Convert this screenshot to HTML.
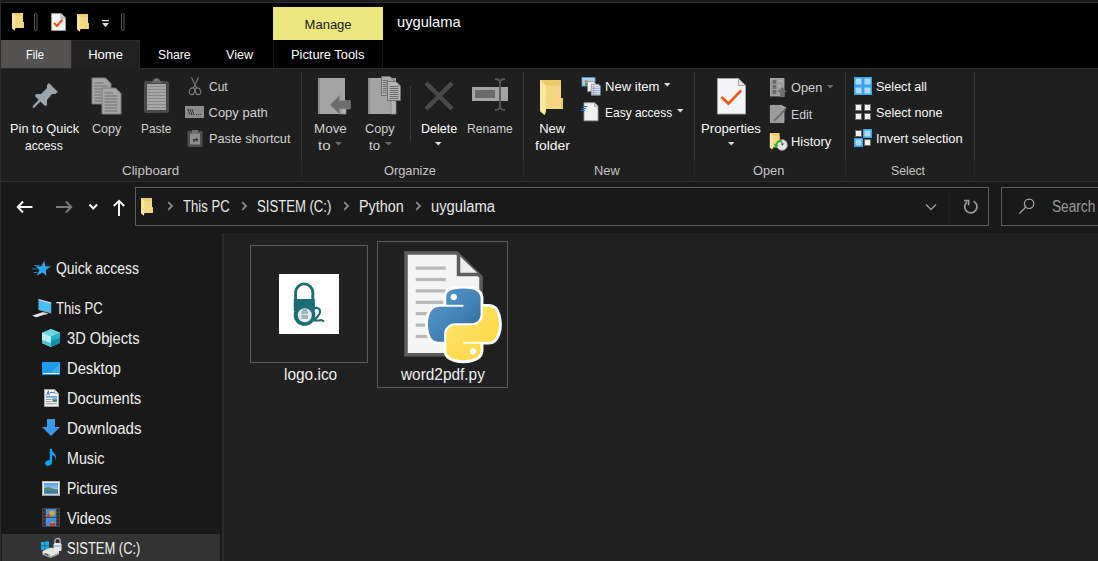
<!DOCTYPE html>
<html><head><meta charset="utf-8"><style>
html,body{margin:0;padding:0;}
body{width:1098px;height:561px;position:relative;overflow:hidden;background:#191919;font-family:"Liberation Sans", sans-serif;}
</style></head><body>
<div style="position:absolute;left:0px;top:0px;width:1098px;height:561px;background:#191919;"></div>
<div style="position:absolute;left:0px;top:0px;width:1098px;height:3px;background:#1c1c1c;"></div>
<div style="position:absolute;left:0px;top:2px;width:1098px;height:1px;background:#333333;"></div>
<div style="position:absolute;left:0px;top:3px;width:1098px;height:65px;background:#000;"></div>
<div style="position:absolute;left:0px;top:0px;width:1px;height:561px;background:#2b2b2b;"></div>
<svg style="position:absolute;left:11px;top:12px" width="14" height="19" viewBox="0 0 14 19"><path d="M1 1 H12 V10 H13 V16 H4 L4 17.5 L3.5 18.5 L1 16Z" fill="#f0cd6e"/><path d="M4.5 4 H12 V16 H4.5Z" fill="#f5d884"/><path d="M1 1 L4.5 4 V16 L3.5 18.5 L1 16Z" fill="#fae39c"/></svg>
<svg style="position:absolute;left:34px;top:13px" width="4" height="18" viewBox="0 0 4 18"><rect x="0.5" y="0.5" width="2.5" height="17" rx="1.25" fill="none" stroke="#5a5a5a"/></svg>
<svg style="position:absolute;left:50.5px;top:12.5px" width="15" height="19" viewBox="0 0 15 19"><path d="M0.5 0.5 H10 L14.5 5 V17.5 H0.5Z" fill="#f4f4f4" stroke="#9a9a9a"/><path d="M10 0.5 V5 H14.5" fill="#dcdcdc" stroke="#9a9a9a"/><path d="M3 10 L6 13 L11.5 6.5" fill="none" stroke="#e8501a" stroke-width="2"/></svg>
<svg style="position:absolute;left:76px;top:13px" width="14" height="19" viewBox="0 0 14 19"><path d="M1 1 H12 V10 H13 V16 H4 L4 17.5 L3.5 18.5 L1 16Z" fill="#f0cd6e"/><path d="M4.5 4 H12 V16 H4.5Z" fill="#f5d884"/><path d="M1 1 L4.5 4 V16 L3.5 18.5 L1 16Z" fill="#fae39c"/></svg>
<svg style="position:absolute;left:101px;top:20px" width="10" height="8" viewBox="0 0 10 8"><rect x="1" y="0" width="7" height="1.3" fill="#e0e0e0"/><path d="M1 3 H8 L4.5 7Z" fill="#e0e0e0"/></svg>
<svg style="position:absolute;left:121px;top:13px" width="4" height="18" viewBox="0 0 4 18"><rect x="0.5" y="0.5" width="2.5" height="17" rx="1.25" fill="none" stroke="#5a5a5a"/></svg>
<div style="position:absolute;left:273px;top:7px;width:110px;height:33px;background:#ebe67e;"></div>
<div style="position:absolute;left:1px;top:40px;width:70px;height:28px;background:#535250;"></div>
<div style="position:absolute;left:71px;top:40px;width:69px;height:29px;background:#2a2a2a;"></div>
<div style="position:absolute;left:72px;top:41px;width:67px;height:28px;background:#212121;"></div>
<div style="position:absolute;left:273px;top:40px;width:1px;height:28px;background:#1a1a1a;"></div>
<div style="position:absolute;left:382px;top:40px;width:1px;height:28px;background:#1a1a1a;"></div>
<div style="position:absolute;left:1px;top:68px;width:1098px;height:113px;background:#1f1f1f;"></div>
<div style="position:absolute;left:1px;top:68px;width:70px;height:1px;background:#2a2a2a;"></div>
<div style="position:absolute;left:140px;top:68px;width:1098px;height:1px;background:#2a2a2a;"></div>
<div style="position:absolute;left:1px;top:181px;width:1098px;height:1px;background:#2e2e2e;"></div>
<div style="position:absolute;left:301px;top:72px;width:1px;height:88px;background:#383838;"></div>
<div style="position:absolute;left:301px;top:160px;width:1px;height:17px;background:#282828;"></div>
<div style="position:absolute;left:523px;top:72px;width:1px;height:88px;background:#383838;"></div>
<div style="position:absolute;left:523px;top:160px;width:1px;height:17px;background:#282828;"></div>
<div style="position:absolute;left:694px;top:72px;width:1px;height:88px;background:#383838;"></div>
<div style="position:absolute;left:694px;top:160px;width:1px;height:17px;background:#282828;"></div>
<div style="position:absolute;left:845px;top:72px;width:1px;height:88px;background:#383838;"></div>
<div style="position:absolute;left:845px;top:160px;width:1px;height:17px;background:#282828;"></div>
<div style="position:absolute;left:974px;top:72px;width:1px;height:88px;background:#383838;"></div>
<div style="position:absolute;left:974px;top:160px;width:1px;height:17px;background:#282828;"></div>
<svg style="position:absolute;left:32px;top:83px" width="27" height="26" viewBox="0 0 27 26"><path d="M17 0 L26 9 L23 11 L20 11 L15 17 L15 22 L13 23 L3 13 L4 11 L9 11 L15 5 L15 2Z" fill="#9ba5ad"/><path d="M8 15 L1 23 L0.5 25 L2.5 24.5 L10 17Z" fill="#9ba5ad"/></svg>
<svg style="position:absolute;left:91px;top:77px" width="32" height="38" viewBox="0 0 32 38"><path d="M1.0 1.0 H14.5 L20.0 6.5 V27.0 H1.0Z" fill="#a6a6a6" stroke="#7a7a7a"/><rect x="3.5" y="5.5" width="9" height="1" fill="#6e6e6e"/><rect x="3.5" y="8.5" width="13" height="1" fill="#6e6e6e"/><rect x="3.5" y="11.5" width="13" height="1" fill="#6e6e6e"/><rect x="3.5" y="14.5" width="13" height="1" fill="#6e6e6e"/><rect x="3.5" y="17.5" width="13" height="1" fill="#6e6e6e"/><rect x="3.5" y="20.5" width="13" height="1" fill="#6e6e6e"/><rect x="3.5" y="23.5" width="13" height="1" fill="#6e6e6e"/><path d="M11.0 11.0 H24.5 L30.0 16.5 V37.0 H11.0Z" fill="#a6a6a6" stroke="#7a7a7a"/><rect x="13.5" y="15.5" width="9" height="1" fill="#6e6e6e"/><rect x="13.5" y="18.5" width="13" height="1" fill="#6e6e6e"/><rect x="13.5" y="21.5" width="13" height="1" fill="#6e6e6e"/><rect x="13.5" y="24.5" width="13" height="1" fill="#6e6e6e"/><rect x="13.5" y="27.5" width="13" height="1" fill="#6e6e6e"/><rect x="13.5" y="30.5" width="13" height="1" fill="#6e6e6e"/><rect x="13.5" y="33.5" width="13" height="1" fill="#6e6e6e"/></svg>
<svg style="position:absolute;left:143px;top:77px" width="27" height="38" viewBox="0 0 27 38"><rect x="1" y="4" width="25" height="32" rx="2" fill="#4a4a4a"/><rect x="4" y="7" width="19" height="26" fill="#a8a8a8"/><rect x="4" y="9" width="19" height="1" fill="#8a8a8a"/><rect x="4" y="12" width="19" height="1" fill="#8a8a8a"/><rect x="4" y="15" width="19" height="1" fill="#8a8a8a"/><rect x="4" y="18" width="19" height="1" fill="#8a8a8a"/><rect x="4" y="21" width="19" height="1" fill="#8a8a8a"/><rect x="4" y="24" width="19" height="1" fill="#8a8a8a"/><rect x="4" y="27" width="19" height="1" fill="#8a8a8a"/><rect x="4" y="30" width="19" height="1" fill="#8a8a8a"/><path d="M8 6 L11 2 H16 L19 6Z" fill="#6a6a6a"/><circle cx="13.5" cy="2.5" r="1.5" fill="#7a7a7a"/></svg>
<svg style="position:absolute;left:187px;top:77px" width="16" height="19" viewBox="0 0 16 19"><path d="M4.5 0.5 L9.5 11 M11.5 0.5 L6.5 11" stroke="#7e7e7e" stroke-width="1.1" fill="none"/><ellipse cx="5" cy="14.3" rx="2.6" ry="3.4" transform="rotate(20 5 14.3)" fill="none" stroke="#7e7e7e" stroke-width="1.1"/><ellipse cx="11" cy="14.3" rx="2.6" ry="3.4" transform="rotate(-20 11 14.3)" fill="none" stroke="#7e7e7e" stroke-width="1.1"/></svg>
<svg style="position:absolute;left:185px;top:106px" width="19" height="12" viewBox="0 0 19 12"><rect x="0" y="0" width="19" height="12" fill="#8c8c8c"/><path d="M3 3 L5 9 M5 3 L7 9 M7 3 L9 9" stroke="#303030" stroke-width="1"/><rect x="11" y="8" width="1" height="1" fill="#303030"/><rect x="13" y="8" width="1" height="1" fill="#303030"/><rect x="15" y="8" width="1" height="1" fill="#303030"/></svg>
<svg style="position:absolute;left:187px;top:129px" width="16" height="18" viewBox="0 0 16 18"><rect x="0.5" y="2" width="15" height="16" rx="1" fill="#4e4e4e"/><rect x="3" y="4.5" width="10" height="11" fill="#8e8e8e"/><path d="M5 1 H11 V4 H5Z" fill="#6e6e6e"/><path d="M6 13 V10 H9 V8.5 L11.5 10.8 L9 13 V11.5 H7.5 V13Z" fill="#3a3a3a"/></svg>
<svg style="position:absolute;left:317px;top:77px" width="35" height="39" viewBox="0 0 35 39"><path d="M1 1 H28 V37 H1Z" fill="#a4a4a4"/><path d="M1 1 H3 V37 H1Z" fill="#8e8e8e"/><path d="M24 37 V26 Q24 23 26.5 23 Q29 23 29 26 V37Z" fill="#b2b2b2" stroke="#8a8a8a" stroke-width="0.8"/><path d="M13 27.8 L22.6 18.3 V23.7 H33.3 V31.9 H22.6 V37.3Z" fill="#6c6c6c" stroke="#8c8c8c" stroke-width="0.7"/></svg>
<svg style="position:absolute;left:335px;top:142px" width="7" height="4" viewBox="0 0 7 4"><path d="M0 0 H7 L3.5 3.5Z" fill="#6a6a6a"/></svg>
<svg style="position:absolute;left:367px;top:76px" width="35" height="39" viewBox="0 0 35 39"><path d="M1 2 H29 V38 H1Z" fill="#a4a4a4"/><path d="M1 2 H3 V38 H1Z" fill="#8e8e8e"/><path d="M24 38 V27 Q24 24 26.5 24 Q29 24 29 27 V38Z" fill="#b2b2b2" stroke="#8a8a8a" stroke-width="0.8"/><path d="M14.5 0.5 H23 L27.5 5 V19.5 H14.5Z" fill="#acacac" stroke="#707070"/><path d="M20.5 5.5 H29 L33.5 10 V24.5 H20.5Z" fill="#b6b6b6" stroke="#707070"/><rect x="16" y="4" width="5" height="1" fill="#707070"/><rect x="16" y="6" width="5" height="1" fill="#707070"/><rect x="16" y="8" width="5" height="1" fill="#707070"/><rect x="16" y="10" width="5" height="1" fill="#707070"/><rect x="16" y="12" width="5" height="1" fill="#707070"/><rect x="16" y="14" width="5" height="1" fill="#707070"/><rect x="16" y="16" width="5" height="1" fill="#707070"/><rect x="22.5" y="10" width="9" height="1" fill="#6a6a6a"/><rect x="22.5" y="12" width="9" height="1" fill="#6a6a6a"/><rect x="22.5" y="14" width="9" height="1" fill="#6a6a6a"/><rect x="22.5" y="16" width="9" height="1" fill="#6a6a6a"/><rect x="22.5" y="18" width="9" height="1" fill="#6a6a6a"/><rect x="22.5" y="20" width="9" height="1" fill="#6a6a6a"/><rect x="22.5" y="22" width="9" height="1" fill="#6a6a6a"/></svg>
<svg style="position:absolute;left:385px;top:142px" width="7" height="4" viewBox="0 0 7 4"><path d="M0 0 H7 L3.5 3.5Z" fill="#6a6a6a"/></svg>
<div style="position:absolute;left:410px;top:86px;width:1px;height:55px;background:#3a3a3a;"></div>
<svg style="position:absolute;left:423px;top:80px" width="32" height="32" viewBox="0 0 32 32"><path d="M3 3 L29 29 M29 3 L3 29" stroke="#4a4a4a" stroke-width="4.5"/></svg>
<svg style="position:absolute;left:435px;top:142px" width="7" height="4" viewBox="0 0 7 4"><path d="M0 0 H6.5 L3.25 3.5Z" fill="#e0e0e0"/></svg>
<svg style="position:absolute;left:472px;top:78px" width="36" height="34" viewBox="0 0 36 34"><rect x="0" y="9" width="36" height="14" fill="#a4a4a4"/><rect x="3" y="12" width="20" height="8" fill="#6a6a6a"/><path d="M23 1 Q28 1 28 5 V28 Q28 32 33 32 M33 1 Q28 1 28 5 M28 28 Q28 32 23 32" stroke="#555" stroke-width="1.8" fill="none"/></svg>
<svg style="position:absolute;left:539.7px;top:80px" width="23" height="35" viewBox="0 0 23 35"><path d="M0 0 H21 V18 H23 V29 H6 V32 L4.5 35 L0 31Z" fill="#eec965"/><path d="M6 5.5 H21 V29 H6Z" fill="#f4d682"/><path d="M0 0 L6 5.5 V29 L4.5 35 L0 31Z" fill="#fbe6a2"/></svg>
<svg style="position:absolute;left:581px;top:77px" width="20" height="19" viewBox="0 0 20 19"><rect x="1" y="0.5" width="13" height="8.5" fill="#a8d4f0" stroke="#5a9ac8" stroke-width="0.8"/><circle cx="5" cy="4" r="1.5" fill="#c89060"/><rect x="4" y="5.5" width="2.5" height="3" fill="#3a9a50"/><path d="M6.5 4.5 H12.5 L14.5 6.5 V14.5 H6.5Z" fill="#f0f0f0" stroke="#888" stroke-width="0.8"/><path d="M10.3 7.3 H17.5 L19.3 9.1 V18.3 H10.3Z" fill="#f4f6fa" stroke="#888" stroke-width="0.8"/><rect x="11" y="9.5" width="7.5" height="0.8" fill="#6a9ae0"/><rect x="11" y="11.3" width="7.5" height="0.8" fill="#6a9ae0"/><rect x="11" y="13.1" width="7.5" height="0.8" fill="#6a9ae0"/><rect x="11" y="14.9" width="7.5" height="0.8" fill="#6a9ae0"/><rect x="11" y="16.7" width="7.5" height="0.8" fill="#6a9ae0"/><rect x="12.5" y="8" width="0.7" height="10" fill="#e07070"/></svg>
<svg style="position:absolute;left:664px;top:83px" width="7" height="4" viewBox="0 0 7 4"><path d="M0 0 H6.5 L3.25 3.5Z" fill="#e0e0e0"/></svg>
<svg style="position:absolute;left:580px;top:102px" width="19" height="20" viewBox="0 0 19 20"><path d="M4 0.8 H14.5 L18 4.3 V18.8 H4Z" fill="#f2f2f2" stroke="#9a9a9a" stroke-width="0.9"/><path d="M14.5 0.8 V4.3 H18" fill="#dadada" stroke="#9a9a9a" stroke-width="0.8"/><path d="M2.5 4.5 H7.5 M1.5 6.5 H6 M0.8 8.5 H5" stroke="#1a6ac8" stroke-width="1"/></svg>
<svg style="position:absolute;left:676.5px;top:109px" width="7" height="4" viewBox="0 0 7 4"><path d="M0 0 H6.5 L3.25 3.5Z" fill="#e0e0e0"/></svg>
<svg style="position:absolute;left:716.5px;top:77.5px" width="29" height="37" viewBox="0 0 29 37"><path d="M0.5 0.5 H21.5 L28.5 7.5 V36 H0.5Z" fill="#f4f4f6" stroke="#a8a8a8" stroke-width="0.9"/><path d="M21.5 0.5 V7.5 H28.5Z" fill="#e4e4e4" stroke="#9a9a9a" stroke-width="0.9"/><path d="M4.3 18.9 L11.5 25.6 L24.2 12.4" fill="none" stroke="#ee5a16" stroke-width="2.8"/></svg>
<svg style="position:absolute;left:728px;top:142px" width="7" height="4" viewBox="0 0 7 4"><path d="M0 0 H6.5 L3.25 3.5Z" fill="#e0e0e0"/></svg>
<svg style="position:absolute;left:769px;top:77px" width="19" height="21" viewBox="0 0 19 21"><rect x="1.4" y="1.4" width="13.6" height="17.6" fill="#9c9c9c" stroke="#b2b2b2" stroke-width="0.8"/><rect x="3.5" y="3" width="3.8" height="3.8" fill="#6a6a6a"/><rect x="3.5" y="8" width="3.8" height="3.8" fill="#6a6a6a"/><rect x="3.5" y="13" width="3.8" height="3.8" fill="#6a6a6a"/><rect x="9" y="3.5" width="5" height="0.9" fill="#c4c4c4"/><rect x="9" y="8.5" width="3" height="0.9" fill="#c4c4c4"/><path d="M13.3 10 L17.8 15 H15.5 V20 H11 V15 H8.6Z" fill="#707070"/></svg>
<svg style="position:absolute;left:827px;top:85px" width="7" height="4" viewBox="0 0 7 4"><path d="M0 0 H6.5 L3.25 3.5Z" fill="#6a6a6a"/></svg>
<svg style="position:absolute;left:769px;top:104px" width="19" height="20" viewBox="0 0 19 20"><path d="M1.4 1.4 H12.5 L15 3.9 V18.6 H1.4Z" fill="#9c9c9c" stroke="#b2b2b2" stroke-width="0.8"/><path d="M12.5 1.4 L17 4 L15 3.9Z" fill="#c4c4c4" stroke="#b2b2b2" stroke-width="0.8"/><path d="M4 17.5 L4.8 15 L15.6 4.3 L17.2 5.9 L6.5 16.7Z" fill="#6c6c6c"/><path d="M4.8 15 L15.6 4.3" stroke="#b8b8b8" stroke-width="0.6"/></svg>
<svg style="position:absolute;left:769px;top:131px" width="20" height="21" viewBox="0 0 20 21"><g transform="translate(0,1) scale(0.88 0.95)"><path d="M1 1 H12 V10 H13 V16 H4 L4 17.5 L3.5 18.5 L1 16Z" fill="#f0cd6e"/><path d="M4.5 4 H12 V16 H4.5Z" fill="#f5d884"/><path d="M1 1 L4.5 4 V16 L3.5 18.5 L1 16Z" fill="#fae39c"/></g><circle cx="13" cy="14" r="5.4" fill="#e6e8ea" stroke="#a0a0a0" stroke-width="0.6"/><path d="M13 11 V14.2 L15.2 12.4" stroke="#303030" stroke-width="0.9" fill="none"/><circle cx="13" cy="9.6" r="0.4" fill="#555"/><circle cx="13" cy="18.4" r="0.4" fill="#555"/><circle cx="17.4" cy="14" r="0.4" fill="#555"/><path d="M12.8 8.5 Q7.8 8.8 6.6 13.2 L5 12.2 L5.8 17.2 L9.6 14.4 L8.2 13.8 Q9.2 11 12.8 11Z" fill="#2cb42c"/></svg>
<svg style="position:absolute;left:854px;top:77px" width="18" height="18" viewBox="0 0 18 18"><rect x="0.75" y="0.75" width="7.5" height="7.5" fill="#a8dcfa" stroke="#3aa0f0" stroke-width="1.5"/><rect x="9.75" y="0.75" width="7.5" height="7.5" fill="#a8dcfa" stroke="#3aa0f0" stroke-width="1.5"/><rect x="0.75" y="9.75" width="7.5" height="7.5" fill="#a8dcfa" stroke="#3aa0f0" stroke-width="1.5"/><rect x="9.75" y="9.75" width="7.5" height="7.5" fill="#a8dcfa" stroke="#3aa0f0" stroke-width="1.5"/></svg>
<svg style="position:absolute;left:854px;top:103px" width="18" height="18" viewBox="0 0 18 18"><rect x="1.5" y="1.5" width="6" height="6" fill="#f2f2f2" stroke="#6a6a6a" stroke-width="1"/><rect x="10.5" y="1.5" width="6" height="6" fill="#f2f2f2" stroke="#6a6a6a" stroke-width="1"/><rect x="1.5" y="10.5" width="6" height="6" fill="#f2f2f2" stroke="#6a6a6a" stroke-width="1"/><rect x="10.5" y="10.5" width="6" height="6" fill="#f2f2f2" stroke="#6a6a6a" stroke-width="1"/></svg>
<svg style="position:absolute;left:854px;top:129px" width="18" height="18" viewBox="0 0 18 18"><rect x="1.5" y="1.5" width="6" height="6" fill="#f2f2f2" stroke="#6a6a6a" stroke-width="1"/><rect x="9.75" y="0.75" width="7.5" height="7.5" fill="#a8dcfa" stroke="#3aa0f0" stroke-width="1.5"/><rect x="0.75" y="9.75" width="7.5" height="7.5" fill="#a8dcfa" stroke="#3aa0f0" stroke-width="1.5"/><rect x="10.5" y="10.5" width="6" height="6" fill="#f2f2f2" stroke="#6a6a6a" stroke-width="1"/></svg>
<svg style="position:absolute;left:0px;top:190px" width="140" height="30" viewBox="0 0 140 30"><g fill="none" stroke-width="2" stroke-linecap="butt"><path d="M23 11.5 L17.8 17 L23 22.5 M18 17 H32.5" stroke="#f4f4f4"/><path d="M66 11.5 L71.2 17 L66 22.5 M71 17 H56" stroke="#7a7a7a"/><path d="M89.5 14.5 L93.3 18.5 L97.1 14.5" stroke="#f4f4f4"/><path d="M113.8 16 L119 10.8 L124.2 16 M119 11 V26" stroke="#f4f4f4"/></g></svg>
<div style="position:absolute;left:135px;top:187px;width:854px;height:39px;background:#5e5e5e;"></div>
<div style="position:absolute;left:136px;top:188px;width:852px;height:37px;background:#191919;"></div>
<div style="position:absolute;left:949px;top:188px;width:1px;height:37px;background:#202020;"></div>
<svg style="position:absolute;left:140px;top:197px" width="14" height="19" viewBox="0 0 14 19"><path d="M1 1 H12 V10 H13 V16 H4 L4 17.5 L3.5 18.5 L1 16Z" fill="#f0cd6e"/><path d="M4.5 4 H12 V16 H4.5Z" fill="#f5d884"/><path d="M1 1 L4.5 4 V16 L3.5 18.5 L1 16Z" fill="#fae39c"/></svg>
<svg style="position:absolute;left:167px;top:200.5px" width="7" height="11" viewBox="0 0 7 11"><path d="M1.2 1.2 L5 5 L1.2 8.8" stroke="#8a8a8a" stroke-width="1.8" fill="none"/></svg>
<svg style="position:absolute;left:241px;top:200.5px" width="7" height="11" viewBox="0 0 7 11"><path d="M1.2 1.2 L5 5 L1.2 8.8" stroke="#8a8a8a" stroke-width="1.8" fill="none"/></svg>
<svg style="position:absolute;left:343px;top:200.5px" width="7" height="11" viewBox="0 0 7 11"><path d="M1.2 1.2 L5 5 L1.2 8.8" stroke="#8a8a8a" stroke-width="1.8" fill="none"/></svg>
<svg style="position:absolute;left:415px;top:200.5px" width="7" height="11" viewBox="0 0 7 11"><path d="M1.2 1.2 L5 5 L1.2 8.8" stroke="#8a8a8a" stroke-width="1.8" fill="none"/></svg>
<svg style="position:absolute;left:925px;top:203px" width="12" height="8" viewBox="0 0 12 8"><path d="M1 1.5 L6 6.5 L11 1.5" stroke="#9a9a9a" stroke-width="1.5" fill="none"/></svg>
<svg style="position:absolute;left:958px;top:195px" width="24" height="24" viewBox="0 0 24 24"><path d="M15.4 6.2 A6.1 6.1 0 1 1 8.9 7.1" stroke="#9a9a9a" stroke-width="1.7" fill="none"/><path d="M6 5.6 H10.6 V10.2" stroke="#9a9a9a" stroke-width="1.7" fill="none"/></svg>
<div style="position:absolute;left:1001px;top:187px;width:97px;height:39px;background:#5e5e5e;"></div>
<div style="position:absolute;left:1002px;top:188px;width:96px;height:37px;background:#191919;"></div>
<svg style="position:absolute;left:1012px;top:195px" width="28" height="24" viewBox="0 0 28 24"><circle cx="17.1" cy="8.8" r="4.7" stroke="#a8a8a8" stroke-width="1.2" fill="none"/><path d="M13.6 12.3 L7.3 18.6" stroke="#a8a8a8" stroke-width="1.3"/></svg>
<div style="position:absolute;left:222px;top:233px;width:2px;height:328px;background:#2b2b2b;"></div>
<div style="position:absolute;left:224px;top:233px;width:874px;height:328px;background:#202020;"></div>
<svg style="position:absolute;left:31px;top:260px" width="21" height="18" viewBox="0 0 21 18"><path d="M13.28 0.80 L14.37 6.17 L20.05 6.47 L14.93 10.08 L15.43 15.63 L11.17 12.50 L5.79 15.63 L8.28 10.08 L4.46 6.47 L10.25 6.17Z" fill="#2aa6f2"/><path d="M3 5.5 H8.5 M1 9 H6 M2.5 12.5 H6.5" stroke="#2aa6f2" stroke-width="0.9" opacity="0.75"/></svg>
<svg style="position:absolute;left:31px;top:298px" width="22" height="22" viewBox="0 0 22 22"><path d="M7.5 1.5 L20.2 5.2 V15 L7.5 11.5Z" fill="#46bdf6"/><path d="M7.5 1.5 L20.2 5.2" stroke="#d8e4ea" stroke-width="1.2"/><path d="M7.5 11.5 L20.2 15" stroke="#9fb8c4" stroke-width="0.8"/><path d="M12 14 L17.5 15.5 L14.5 16.8 L9.5 15.3Z" fill="#d0d0d0"/><path d="M1 17.8 L10.5 14.5 L15 16 L5.5 19.2Z" fill="#e6e6e6"/></svg>
<div style="position:absolute;left:2px;top:534px;width:218px;height:27px;background:#333333;"></div>
<svg style="position:absolute;left:42px;top:329px" width="18" height="18" viewBox="0 0 18 18"><path d="M9 0 L18 3.8 V14 L9 18 L0 14 V3.8Z" fill="#21b2c8"/><path d="M0 3.8 L9 0 L18 3.8 L9 7.6Z" fill="#6fd6e6"/><path d="M0 3.8 L9 7.6 V18 L0 14Z" fill="#bdeef3"/><path d="M9 12 L18 9 V14 L9 18Z" fill="#148ea6"/><path d="M0 11 L9 14 V18 L0 14Z" fill="#49c4d6"/></svg>
<svg style="position:absolute;left:42px;top:362px" width="18" height="13" viewBox="0 0 18 13"><rect x="0" y="0" width="18" height="13" fill="#1a9cf0"/><path d="M8 12 L18 1 V12Z" fill="#3aaef6"/><rect x="1" y="11" width="16" height="1" fill="#e8f4ff"/></svg>
<svg style="position:absolute;left:44px;top:389px" width="15" height="18" viewBox="0 0 15 18"><path d="M0.5 0.5 H10.5 L14.5 4.5 V17.5 H0.5Z" fill="#f2f2f2" stroke="#a8a8a8"/><path d="M10.5 0.5 V4.5 H14.5" fill="#e0e0e0" stroke="#a8a8a8" stroke-width="0.8"/><path d="M2.5 6.2 L4.5 1.8 L5.2 6.2 M3.2 4.6 H5" stroke="#2a7ad8" stroke-width="1" fill="none"/><rect x="6" y="3" width="4.5" height="0.9" fill="#2a7ad8"/><rect x="2" y="7.3" width="11" height="1.2" fill="#2a7ad8"/><rect x="2" y="10" width="5.5" height="0.9" fill="#8a8a8a"/><rect x="8.5" y="9.5" width="4.5" height="3.5" fill="#4a8a5a"/><rect x="8.5" y="9.5" width="4.5" height="1.5" fill="#5a9ae0"/><rect x="2" y="12.2" width="5.5" height="0.9" fill="#8a8a8a"/><rect x="2" y="14.4" width="11" height="0.9" fill="#8a8a8a"/></svg>
<svg style="position:absolute;left:42px;top:419px" width="18" height="18" viewBox="0 0 18 18"><path d="M5 0 H13 V8 H18 L9 17 L0 8 H5Z" fill="#3a98e8"/></svg>
<svg style="position:absolute;left:42px;top:447px" width="16" height="20" viewBox="0 0 16 20"><path d="M8.9 1.8 V15.5" stroke="#10a2f2" stroke-width="2.4"/><path d="M8.2 1.8 Q10 4.5 12.5 6.5 Q15 9 13 13.5 Q13.8 10 11.5 8.5 Q10 7.6 8.2 7.5Z" fill="#10a2f2"/><ellipse cx="6.5" cy="16" rx="3.5" ry="2.7" transform="rotate(-20 6.5 16)" fill="#10a2f2"/></svg>
<svg style="position:absolute;left:42px;top:480.5px" width="18" height="15" viewBox="0 0 18 15"><defs><linearGradient id="sky" x1="0" y1="0" x2="0" y2="1"><stop offset="0" stop-color="#5a9ee8"/><stop offset="1" stop-color="#c8e0f4"/></linearGradient></defs><rect x="0" y="0" width="18" height="14.5" fill="#f0f0f0"/><rect x="0.5" y="0.5" width="17" height="13.5" fill="none" stroke="#b8b8b8" stroke-width="1"/><rect x="2" y="2" width="14" height="10.5" fill="url(#sky)"/><path d="M2 7.5 Q6 5.5 9 7 Q12 8.5 16 8 V12.5 H2Z" fill="#4e8a72"/><path d="M2 10.5 Q9 9.5 16 11 V12.5 H2Z" fill="#3a78b8"/></svg>
<svg style="position:absolute;left:42px;top:508px" width="18" height="19" viewBox="0 0 18 19"><rect x="0" y="0" width="18" height="19" fill="#474747"/><rect x="4" y="1" width="10" height="8" fill="#4a8ee0"/><rect x="4" y="10" width="10" height="8" fill="#4a8ee0"/><circle cx="10" cy="5" r="2.6" fill="#e0a820"/><rect x="5" y="6" width="3" height="3" fill="#d04040"/><circle cx="10.5" cy="16" r="2" fill="#e8b020"/><rect x="8" y="15" width="5" height="3" fill="#c83a3a"/><rect x="1" y="1.5" width="2" height="2" fill="#2a2a2a"/><rect x="15" y="1.5" width="2" height="2" fill="#2a2a2a"/><rect x="1" y="5.0" width="2" height="2" fill="#2a2a2a"/><rect x="15" y="5.0" width="2" height="2" fill="#2a2a2a"/><rect x="1" y="8.5" width="2" height="2" fill="#2a2a2a"/><rect x="15" y="8.5" width="2" height="2" fill="#2a2a2a"/><rect x="1" y="12.0" width="2" height="2" fill="#2a2a2a"/><rect x="15" y="12.0" width="2" height="2" fill="#2a2a2a"/><rect x="1" y="15.5" width="2" height="2" fill="#2a2a2a"/><rect x="15" y="15.5" width="2" height="2" fill="#2a2a2a"/></svg>
<svg style="position:absolute;left:40px;top:537px" width="22" height="21" viewBox="0 0 22 21"><rect x="1" y="5" width="3.6" height="3.6" fill="#16b4f0"/><rect x="5.2" y="4.4" width="3.8" height="4.2" fill="#16b4f0"/><rect x="1" y="9.2" width="3.6" height="3.6" fill="#16b4f0"/><rect x="5.2" y="9.2" width="3.8" height="4.2" fill="#16b4f0"/><path d="M2.5 14 L11 10.5 L19 13.5 V16 L10.5 19.8 L2.5 16.5Z" fill="#e4e4e4"/><path d="M2.5 16.5 L10.5 19.8 L19 16 V17.5 L10.5 21 L2.5 17.8Z" fill="#a8a8a8"/><rect x="5" y="16" width="4" height="1.2" fill="#404040" transform="rotate(22 5 16)"/><circle cx="9.5" cy="18" r="0.7" fill="#30c030"/><path d="M15 6 V4 A2.6 2.6 0 0 1 20.2 4 V6" stroke="#b0b8bc" stroke-width="1.3" fill="none"/><rect x="13.5" y="6" width="8" height="8" rx="1.5" fill="#e8eaec"/><rect x="13.5" y="8.5" width="8" height="1" fill="#6aa8d8"/></svg>
<div style="position:absolute;left:250px;top:245px;width:118px;height:118px;background:#5a5a5a;"></div>
<div style="position:absolute;left:251px;top:246px;width:116px;height:116px;background:#202020;"></div>
<div style="position:absolute;left:279px;top:274px;width:60px;height:60px;background:#ffffff;"></div>
<svg style="position:absolute;left:278px;top:273px" width="62" height="62" viewBox="0 0 62 62"><path d="M17.6 28 V19.5 A8.6 8.6 0 0 1 34.8 19.5 V28" stroke="#1f6c74" stroke-width="2.9" fill="none"/><rect x="15.8" y="26" width="21" height="9" fill="#1f6c74"/><circle cx="26.5" cy="42" r="10.8" fill="#1f6c74"/><rect x="15.8" y="30" width="21" height="8" fill="#1f6c74"/><circle cx="26.8" cy="42.2" r="7" fill="#e4ecee"/><rect x="23.5" y="38.5" width="6.5" height="7.5" fill="#9cb8bd"/><rect x="24.5" y="36.5" width="4.5" height="2" fill="#7aa4ab"/><rect x="23.5" y="41" width="6.5" height="1" fill="#dde8ea"/><path d="M34.5 37 Q38 33.5 41.2 36 Q43.5 39 40 43 L36 47.5 H41.5 Q43.5 46.5 46 48.5" stroke="#1f6c74" stroke-width="2.2" fill="none"/></svg>
<div style="position:absolute;left:377px;top:241px;width:131px;height:147px;background:#5a5a5a;"></div>
<div style="position:absolute;left:378px;top:242px;width:129px;height:145px;background:#202020;"></div>
<svg style="position:absolute;left:404px;top:251px" width="80" height="108" viewBox="0 0 80 108"><path d="M2 2 H53 L77 26 V103.8 H2Z" fill="#f4f4f4" stroke="#5c5c5c" stroke-width="3.5" stroke-linejoin="miter"/><path d="M54.5 4 V23.5 H75" fill="#ececec" stroke="#5c5c5c" stroke-width="3.5"/><rect x="11.7" y="15.5" width="30" height="3.2" fill="#b8b8b8"/><rect x="11.7" y="26.9" width="30" height="3.2" fill="#b8b8b8"/><rect x="11.7" y="38.3" width="30" height="3.2" fill="#b8b8b8"/><rect x="11.7" y="49.7" width="30" height="3.2" fill="#b8b8b8"/><rect x="11.7" y="61.1" width="30" height="3.2" fill="#b8b8b8"/><rect x="11.7" y="72.5" width="30" height="3.2" fill="#b8b8b8"/><rect x="11.7" y="83.9" width="30" height="3.2" fill="#b8b8b8"/></svg>
<svg style="position:absolute;left:420px;top:280px" width="90" height="90" viewBox="0 0 90 90"><defs><linearGradient id="gb" x1="0" y1="0" x2="1" y2="1"><stop offset="0" stop-color="#5a9fd4"/><stop offset="1" stop-color="#306998"/></linearGradient><linearGradient id="gy" x1="0" y1="0" x2="1" y2="1"><stop offset="0" stop-color="#ffe873"/><stop offset="1" stop-color="#ffd43b"/></linearGradient></defs><g transform="translate(7.9,8.5) scale(0.64)"><path d="M54.92 0C50.34 0.02 45.96 0.41 42.11 1.09 30.76 3.1 28.7 7.29 28.7 15.03V25.25H55.51V28.66H28.7 18.64C10.84 28.66 4.02 33.34 1.89 42.25-0.57 52.46-0.68 58.84 1.89 69.5 3.79 77.44 8.35 83.09 16.14 83.09H25.36V70.84C25.36 61.99 33.02 54.19 42.11 54.19H68.89C76.35 54.19 82.3 48.05 82.3 40.56V15.03C82.3 7.77 76.17 2.31 68.89 1.09 64.28 0.33 59.5-0.02 54.92 0Z" fill="#fff" stroke="#fff" stroke-width="9" stroke-linejoin="round"/><path d="M85.64 28.66V40.56C85.64 49.79 77.81 57.56 68.89 57.56H42.11C34.77 57.56 28.7 63.84 28.7 71.19V96.72C28.7 103.98 35.02 108.26 42.11 110.34 50.59 112.84 58.73 113.29 68.89 110.34 75.64 108.39 82.3 104.46 82.3 96.72V86.5H55.51V83.09H82.3 95.7C103.5 83.09 106.4 77.66 109.11 69.5 111.91 61.1 111.79 53.02 109.11 42.25 107.18 34.49 103.5 28.66 95.7 28.66Z" fill="#fff" stroke="#fff" stroke-width="9" stroke-linejoin="round"/><path d="M54.92 0C50.34 0.02 45.96 0.41 42.11 1.09 30.76 3.1 28.7 7.29 28.7 15.03V25.25H55.51V28.66H28.7 18.64C10.84 28.66 4.02 33.34 1.89 42.25-0.57 52.46-0.68 58.84 1.89 69.5 3.79 77.44 8.35 83.09 16.14 83.09H25.36V70.84C25.36 61.99 33.02 54.19 42.11 54.19H68.89C76.35 54.19 82.3 48.05 82.3 40.56V15.03C82.3 7.77 76.17 2.31 68.89 1.09 64.28 0.33 59.5-0.02 54.92 0Z" fill="url(#gb)"/><path d="M40.42 8.22C43.19 8.22 45.45 10.52 45.45 13.34 45.45 16.16 43.19 18.44 40.42 18.44 37.64 18.44 35.39 16.16 35.39 13.34 35.39 10.52 37.64 8.22 40.42 8.22Z" fill="#fff"/><path d="M85.64 28.66V40.56C85.64 49.79 77.81 57.56 68.89 57.56H42.11C34.77 57.56 28.7 63.84 28.7 71.19V96.72C28.7 103.98 35.02 108.26 42.11 110.34 50.59 112.84 58.73 113.29 68.89 110.34 75.64 108.39 82.3 104.46 82.3 96.72V86.5H55.51V83.09H82.3 95.7C103.5 83.09 106.4 77.66 109.11 69.5 111.91 61.1 111.79 53.02 109.11 42.25 107.18 34.49 103.5 28.66 95.7 28.66Z" fill="url(#gy)"/><path d="M70.58 93.31C73.36 93.31 75.61 95.59 75.61 98.41 75.61 101.24 73.36 103.53 70.58 103.53 67.81 103.53 65.55 101.24 65.55 98.41 65.55 95.59 67.81 93.31 70.58 93.31Z" fill="#fff"/></g></svg>
<div style="position:absolute;left:304.60px;top:18px;font-size:13px;line-height:13px;color:#1a1a1a;white-space:nowrap;">Manage</div>
<div style="position:absolute;left:396.60px;top:14px;font-size:15px;line-height:15px;color:#ffffff;white-space:nowrap;transform:scaleX(0.9792);transform-origin:0 0;">uygulama</div>
<div style="position:absolute;left:26.40px;top:48px;font-size:13px;line-height:13px;color:#ffffff;white-space:nowrap;transform:scaleX(0.8595);transform-origin:0 0;">File</div>
<div style="position:absolute;left:88.20px;top:48px;font-size:13px;line-height:13px;color:#ffffff;white-space:nowrap;">Home</div>
<div style="position:absolute;left:158.00px;top:48px;font-size:13px;line-height:13px;color:#ffffff;white-space:nowrap;transform:scaleX(0.9399);transform-origin:0 0;">Share</div>
<div style="position:absolute;left:226.20px;top:48px;font-size:13px;line-height:13px;color:#ffffff;white-space:nowrap;transform:scaleX(0.9651);transform-origin:0 0;">View</div>
<div style="position:absolute;left:290.50px;top:48px;font-size:13px;line-height:13px;color:#ffffff;white-space:nowrap;transform:scaleX(0.9893);transform-origin:0 0;">Picture Tools</div>
<div style="position:absolute;left:10.10px;top:122px;font-size:13px;line-height:13px;color:#f8f8f8;white-space:nowrap;transform:scaleX(0.9856);transform-origin:0 0;">Pin to Quick</div>
<div style="position:absolute;left:25.10px;top:139px;font-size:13px;line-height:13px;color:#f8f8f8;white-space:nowrap;transform:scaleX(0.9319);transform-origin:0 0;">access</div>
<div style="position:absolute;left:91.50px;top:122px;font-size:13px;line-height:13px;color:#d0d0d0;white-space:nowrap;transform:scaleX(0.9657);transform-origin:0 0;">Copy</div>
<div style="position:absolute;left:141.30px;top:122px;font-size:13px;line-height:13px;color:#d0d0d0;white-space:nowrap;transform:scaleX(0.9115);transform-origin:0 0;">Paste</div>
<div style="position:absolute;left:208.50px;top:80px;font-size:13px;line-height:13px;color:#d0d0d0;white-space:nowrap;transform:scaleX(0.9245);transform-origin:0 0;">Cut</div>
<div style="position:absolute;left:208.50px;top:106px;font-size:13px;line-height:13px;color:#d0d0d0;white-space:nowrap;">Copy path</div>
<div style="position:absolute;left:208.50px;top:132px;font-size:13px;line-height:13px;color:#d0d0d0;white-space:nowrap;transform:scaleX(0.9808);transform-origin:0 0;">Paste shortcut</div>
<div style="position:absolute;left:122.40px;top:164px;font-size:13px;line-height:13px;color:#c4c4c4;white-space:nowrap;transform:scaleX(1.0262);transform-origin:0 0;">Clipboard</div>
<div style="position:absolute;left:314.00px;top:122px;font-size:13px;line-height:13px;color:#d0d0d0;white-space:nowrap;transform:scaleX(1.0319);transform-origin:0 0;">Move</div>
<div style="position:absolute;left:318.40px;top:139px;font-size:13px;line-height:13px;color:#d0d0d0;white-space:nowrap;transform:scaleX(1.1529);transform-origin:0 0;">to</div>
<div style="position:absolute;left:365.40px;top:122px;font-size:13px;line-height:13px;color:#d0d0d0;white-space:nowrap;transform:scaleX(0.9722);transform-origin:0 0;">Copy</div>
<div style="position:absolute;left:368.70px;top:139px;font-size:13px;line-height:13px;color:#d0d0d0;white-space:nowrap;transform:scaleX(1.0053);transform-origin:0 0;">to</div>
<div style="position:absolute;left:420.50px;top:122px;font-size:13px;line-height:13px;color:#ffffff;white-space:nowrap;transform:scaleX(0.9632);transform-origin:0 0;">Delete</div>
<div style="position:absolute;left:466.70px;top:122px;font-size:13px;line-height:13px;color:#d0d0d0;white-space:nowrap;transform:scaleX(0.9320);transform-origin:0 0;">Rename</div>
<div style="position:absolute;left:384.40px;top:164px;font-size:13px;line-height:13px;color:#c4c4c4;white-space:nowrap;transform:scaleX(0.9857);transform-origin:0 0;">Organize</div>
<div style="position:absolute;left:539.20px;top:122px;font-size:13px;line-height:13px;color:#f8f8f8;white-space:nowrap;">New</div>
<div style="position:absolute;left:534.90px;top:139px;font-size:13px;line-height:13px;color:#f8f8f8;white-space:nowrap;transform:scaleX(1.0734);transform-origin:0 0;">folder</div>
<div style="position:absolute;left:604.50px;top:80px;font-size:13px;line-height:13px;color:#f8f8f8;white-space:nowrap;transform:scaleX(1.0058);transform-origin:0 0;">New item</div>
<div style="position:absolute;left:604.50px;top:106px;font-size:13px;line-height:13px;color:#f8f8f8;white-space:nowrap;transform:scaleX(0.9209);transform-origin:0 0;">Easy access</div>
<div style="position:absolute;left:594.30px;top:164px;font-size:13px;line-height:13px;color:#c4c4c4;white-space:nowrap;transform:scaleX(0.9870);transform-origin:0 0;">New</div>
<div style="position:absolute;left:700.70px;top:122px;font-size:13px;line-height:13px;color:#f8f8f8;white-space:nowrap;transform:scaleX(1.0109);transform-origin:0 0;">Properties</div>
<div style="position:absolute;left:790.70px;top:81px;font-size:13px;line-height:13px;color:#d0d0d0;white-space:nowrap;transform:scaleX(0.9843);transform-origin:0 0;">Open</div>
<div style="position:absolute;left:790.70px;top:108px;font-size:13px;line-height:13px;color:#d0d0d0;white-space:nowrap;transform:scaleX(0.9420);transform-origin:0 0;">Edit</div>
<div style="position:absolute;left:790.70px;top:135px;font-size:13px;line-height:13px;color:#f8f8f8;white-space:nowrap;transform:scaleX(0.9940);transform-origin:0 0;">History</div>
<div style="position:absolute;left:752.70px;top:164px;font-size:13px;line-height:13px;color:#c4c4c4;white-space:nowrap;transform:scaleX(0.9843);transform-origin:0 0;">Open</div>
<div style="position:absolute;left:876.30px;top:80px;font-size:13px;line-height:13px;color:#f8f8f8;white-space:nowrap;transform:scaleX(0.9649);transform-origin:0 0;">Select all</div>
<div style="position:absolute;left:876.30px;top:106px;font-size:13px;line-height:13px;color:#f8f8f8;white-space:nowrap;transform:scaleX(0.9670);transform-origin:0 0;">Select none</div>
<div style="position:absolute;left:876.30px;top:132px;font-size:13px;line-height:13px;color:#f8f8f8;white-space:nowrap;transform:scaleX(0.9916);transform-origin:0 0;">Invert selection</div>
<div style="position:absolute;left:891.00px;top:164px;font-size:13px;line-height:13px;color:#c4c4c4;white-space:nowrap;transform:scaleX(0.9411);transform-origin:0 0;">Select</div>
<div style="position:absolute;left:183.20px;top:199px;font-size:16px;line-height:16px;color:#e8e8e8;white-space:nowrap;transform:scaleX(0.8190);transform-origin:0 0;">This PC</div>
<div style="position:absolute;left:257.00px;top:199px;font-size:16px;line-height:16px;color:#e8e8e8;white-space:nowrap;transform:scaleX(0.8194);transform-origin:0 0;">SISTEM (C:)</div>
<div style="position:absolute;left:359.20px;top:199px;font-size:16px;line-height:16px;color:#e8e8e8;white-space:nowrap;transform:scaleX(0.8954);transform-origin:0 0;">Python</div>
<div style="position:absolute;left:431.10px;top:199px;font-size:16px;line-height:16px;color:#e8e8e8;white-space:nowrap;transform:scaleX(0.9237);transform-origin:0 0;">uygulama</div>
<div style="position:absolute;left:1052.40px;top:199px;font-size:16px;line-height:16px;color:#9a9a9a;white-space:nowrap;transform:scaleX(0.8542);transform-origin:0 0;">Search</div>
<div style="position:absolute;left:56.30px;top:261px;font-size:16px;line-height:16px;color:#f0f0f0;white-space:nowrap;transform:scaleX(0.8714);transform-origin:0 0;">Quick access</div>
<div style="position:absolute;left:56.30px;top:301px;font-size:16px;line-height:16px;color:#f0f0f0;white-space:nowrap;transform:scaleX(0.8190);transform-origin:0 0;">This PC</div>
<div style="position:absolute;left:66.60px;top:331px;font-size:16px;line-height:16px;color:#f0f0f0;white-space:nowrap;transform:scaleX(0.9161);transform-origin:0 0;">3D Objects</div>
<div style="position:absolute;left:66.60px;top:361px;font-size:16px;line-height:16px;color:#f0f0f0;white-space:nowrap;transform:scaleX(0.9201);transform-origin:0 0;">Desktop</div>
<div style="position:absolute;left:66.60px;top:391px;font-size:16px;line-height:16px;color:#f0f0f0;white-space:nowrap;transform:scaleX(0.9156);transform-origin:0 0;">Documents</div>
<div style="position:absolute;left:66.60px;top:421px;font-size:16px;line-height:16px;color:#f0f0f0;white-space:nowrap;transform:scaleX(0.9400);transform-origin:0 0;">Downloads</div>
<div style="position:absolute;left:66.60px;top:451px;font-size:16px;line-height:16px;color:#f0f0f0;white-space:nowrap;transform:scaleX(0.8929);transform-origin:0 0;">Music</div>
<div style="position:absolute;left:66.60px;top:481px;font-size:16px;line-height:16px;color:#f0f0f0;white-space:nowrap;transform:scaleX(0.8721);transform-origin:0 0;">Pictures</div>
<div style="position:absolute;left:66.60px;top:511px;font-size:16px;line-height:16px;color:#f0f0f0;white-space:nowrap;transform:scaleX(0.9108);transform-origin:0 0;">Videos</div>
<div style="position:absolute;left:66.60px;top:541px;font-size:16px;line-height:16px;color:#f0f0f0;white-space:nowrap;transform:scaleX(0.8095);transform-origin:0 0;">SISTEM (C:)</div>
<div style="position:absolute;left:283.60px;top:367px;font-size:16px;line-height:16px;color:#f0f0f0;white-space:nowrap;transform:scaleX(0.9646);transform-origin:0 0;">logo.ico</div>
<div style="position:absolute;left:401.13px;top:367px;font-size:16px;line-height:16px;color:#f0f0f0;white-space:nowrap;transform:scaleX(0.9622);transform-origin:0 0;">word2pdf.py</div>
</body></html>
